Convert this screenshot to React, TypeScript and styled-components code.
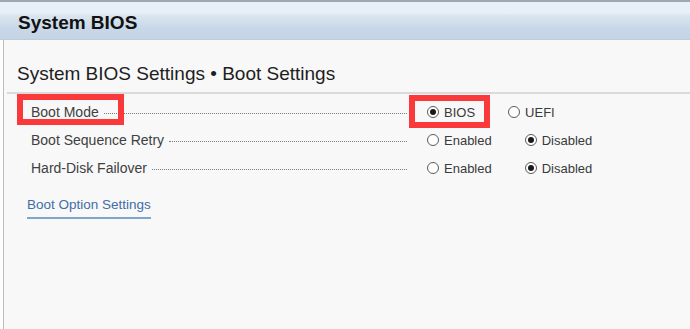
import React from "react";
import styled, { createGlobalStyle } from "styled-components";

const Global = createGlobalStyle`
  html, body {
    margin: 0;
    padding: 0;
    background: #fdfdfd;
    font-family: "Liberation Sans", Arial, sans-serif;
  }
`;

const Frame = styled.div`
  width: 690px;
  height: 329px;
  display: flex;
  flex-direction: column;
  overflow: hidden;
`;

const Header = styled.div`
  box-sizing: border-box;
  height: 40px;
  border-top: 2px solid #9ea8b4;
  border-bottom: 1px solid #c0cbd8;
  background: linear-gradient(
    to bottom,
    #e8f0fa 0%,
    #e6eef8 30%,
    #dce5ee 36%,
    #d3e0ed 50%,
    #c8d8e8 70%,
    #c4d4e5 100%
  );
  padding: 11px 0 0 18px;
  font-size: 19px;
  line-height: 19px;
  font-weight: bold;
  color: #111;
`;

const Body = styled.div`
  flex: 1;
  margin-left: 3px;
  border-left: 1px solid #bdbdbd;
  background: #f8f8f8;
`;

const Title = styled.div`
  margin-left: 3px;
  padding: 24px 0 9px 10px;
  font-size: 19px;
  line-height: 19px;
  color: #1e1e1e;
  border-bottom: 2px solid #dadada;
`;

const Rows = styled.div`
  padding-top: 4px;
`;

const Row = styled.div`
  position: relative;
  height: 28px;
  display: flex;
  align-items: center;
  padding-left: 27px;
`;

const Label = styled.div`
  width: 376px;
  display: flex;
  align-items: center;
  font-size: 14px;
  color: #404040;
  white-space: nowrap;
`;

const Leader = styled.span`
  flex: 1;
  margin: 2px 0 0 5px;
  border-bottom: 1px dotted #7a7a7a;
`;

const Options = styled.div`
  margin-left: 20px;
  display: flex;
  gap: 33px;
`;

const Option = styled.label`
  display: flex;
  align-items: center;
  gap: 5px;
  font-size: 13px;
  color: #3a3a3a;
`;

const Radio = styled.span<{ $on?: boolean }>`
  width: 12px;
  height: 12px;
  box-sizing: border-box;
  border-radius: 50%;
  border: 1px solid #5a5a5a;
  background: #fff;
  display: flex;
  align-items: center;
  justify-content: center;

  &::after {
    content: "";
    width: 6px;
    height: 6px;
    border-radius: 50%;
    background: ${({ $on }) => ($on ? "#1a1a1a" : "transparent")};
  }
`;

const Mark = styled.span<{ $left: number; $top: number; $w: number; $h: number }>`
  position: absolute;
  left: ${({ $left }) => $left}px;
  top: ${({ $top }) => $top}px;
  width: ${({ $w }) => $w}px;
  height: ${({ $h }) => $h}px;
  box-sizing: border-box;
  border: 6px solid #fa3a3a;
  pointer-events: none;
`;

const LinkText = styled.a`
  display: inline-block;
  margin: 15px 0 0 23px;
  padding-bottom: 4px;
  font-size: 13.5px;
  line-height: 16px;
  color: #3f6ea6;
  text-decoration: none;
  border-bottom: 2px solid #80a6cc;
`;

type Setting = {
  label: string;
  options: string[];
  value: string;
};

const settings: Setting[] = [
  { label: "Boot Mode", options: ["BIOS", "UEFI"], value: "BIOS" },
  { label: "Boot Sequence Retry", options: ["Enabled", "Disabled"], value: "Disabled" },
  { label: "Hard-Disk Failover", options: ["Enabled", "Disabled"], value: "Disabled" },
];

export default function App() {
  return (
    <Frame>
      <Global />
      <Header>System BIOS</Header>
      <Body>
        <Title>System BIOS Settings • Boot Settings</Title>
        <Rows>
          {settings.map((s, i) => (
            <Row key={s.label}>
              <Label>
                {s.label}
                <Leader />
              </Label>
              <Options>
                {s.options.map((o) => (
                  <Option key={o}>
                    <Radio $on={o === s.value} />
                    {o}
                  </Option>
                ))}
              </Options>
              {i === 0 && (
                <>
                  <Mark $left={13} $top={-4} $w={107} $h={31} />
                  <Mark $left={405} $top={-3} $w={81} $h={33} />
                </>
              )}
            </Row>
          ))}
        </Rows>
        <LinkText href="#">Boot Option Settings</LinkText>
      </Body>
    </Frame>
  );
}
